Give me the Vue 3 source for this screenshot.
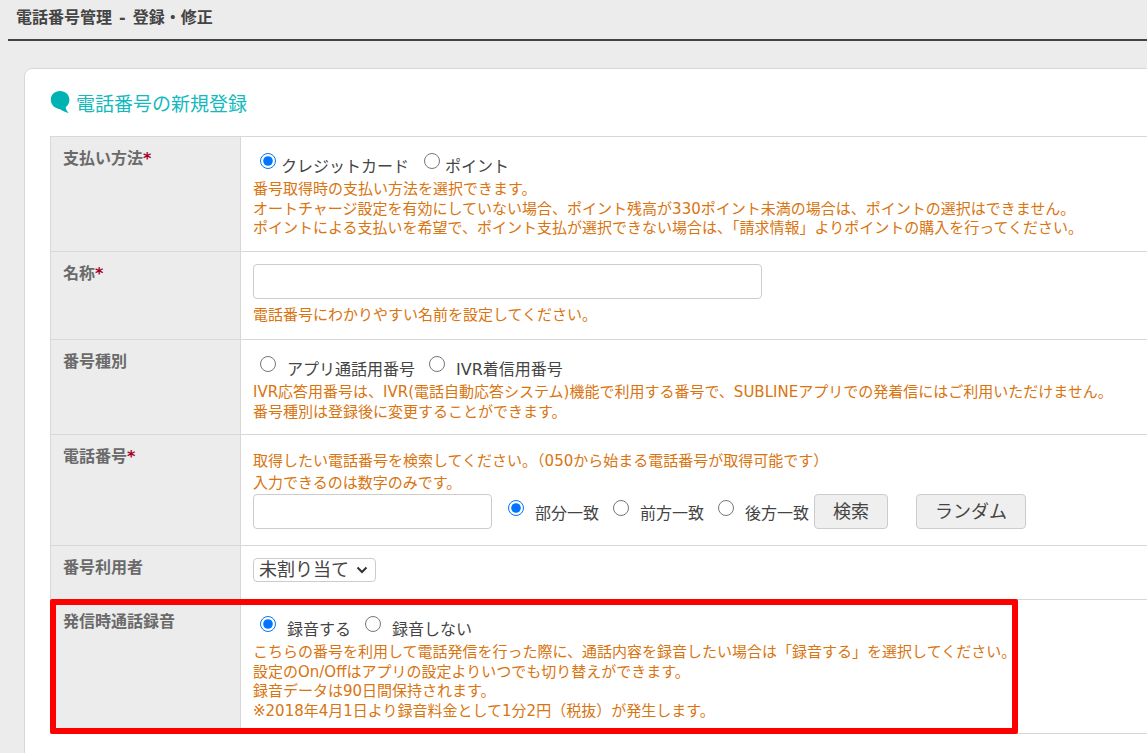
<script setup>
import { ref } from "vue";
const pay = ref("credit");
const kind = ref("");
const match = ref("part");
const rec = ref("on");
</script>
<template>
	<div class="page">
		<div class="title">電話番号管理 - 登録・修正</div>
		<div class="card">
			<h2 class="heading">
				<svg class="bubble" width="20" height="24" viewBox="0 0 20 24">
					<path d="M10 1C4.6 1 .8 4.700 .8 9.800C.8 15 5 18.500 10 19.200C12.200 20.500 14.800 22.300 18.700 23C16.800 21 15.800 19.300 15.700 17.300C17.900 15.700 19.400 13 19.400 9.800C19.400 4.700 15.400 1 10 1Z" fill="#00b3b3" />
				</svg>
				電話番号の新規登録
			</h2>
			<table class="form">
				<tbody>
					<tr class="r-pay">
						<th>支払い方法<span class="req">*</span></th>
						<td>
							<div class="radios tight">
								<label><input type="radio" value="credit" v-model="pay">クレジットカード</label>
								<label><input type="radio" value="point" v-model="pay">ポイント</label>
							</div>
							<p class="note">番号取得時の支払い方法を選択できます。<br>オートチャージ設定を有効にしていない場合、ポイント残高が330ポイント未満の場合は、ポイントの選択はできません。<br>ポイントによる支払いを希望で、ポイント支払が選択できない場合は、「請求情報」よりポイントの購入を行ってください。</p>
						</td>
					</tr>
					<tr class="r-name">
						<th>名称<span class="req">*</span></th>
						<td>
							<input class="text name" type="text">
							<p class="note">電話番号にわかりやすい名前を設定してください。</p>
						</td>
					</tr>
					<tr class="r-kind">
						<th>番号種別</th>
						<td>
							<div class="radios">
								<label><input type="radio" value="app" v-model="kind">アプリ通話用番号</label>
								<label><input type="radio" value="ivr" v-model="kind">IVR着信用番号</label>
							</div>
							<p class="note">IVR応答用番号は、IVR(電話自動応答システム)機能で利用する番号で、SUBLINEアプリでの発着信にはご利用いただけません。<br>番号種別は登録後に変更することができます。</p>
						</td>
					</tr>
					<tr class="r-tel">
						<th>電話番号<span class="req">*</span></th>
						<td>
							<p class="note">取得したい電話番号を検索してください。（050から始まる電話番号が取得可能です）<br>入力できるのは数字のみです。</p>
							<div class="search">
								<input class="text tel" type="text">
								<div class="radios">
									<label><input type="radio" value="part" v-model="match">部分一致</label>
									<label><input type="radio" value="front" v-model="match">前方一致</label>
									<label><input type="radio" value="back" v-model="match">後方一致</label>
								</div>
								<button class="btn find">検索</button>
								<button class="btn random">ランダム</button>
							</div>
						</td>
					</tr>
					<tr class="r-user">
						<th>番号利用者</th>
						<td>
							<div class="user-wrap">
								<select class="user">
									<option>未割り当て</option>
								</select>
								<svg class="chevron" width="12" height="8" viewBox="0 0 12 8">
									<path d="M1.500 1.500L6 6L10.500 1.500" fill="none" stroke="#333" stroke-width="2" />
								</svg>
							</div>
						</td>
					</tr>
					<tr class="r-rec">
						<th>発信時通話録音</th>
						<td>
							<div class="radios">
								<label><input type="radio" value="on" v-model="rec">録音する</label>
								<label><input type="radio" value="off" v-model="rec">録音しない</label>
							</div>
							<p class="note">こちらの番号を利用して電話発信を行った際に、通話内容を録音したい場合は「録音する」を選択してください。<br>設定のOn/Offはアプリの設定よりいつでも切り替えができます。<br>録音データは90日間保持されます。<br>※2018年4月1日より録音料金として1分2円（税抜）が発生します。</p>
						</td>
					</tr>
				</tbody>
			</table>
			<div class="highlight"></div>
		</div>
	</div>
</template>
<style scoped>
.page {
	width: 1147px;
	height: 753px;
	overflow: hidden;
	background: #ececec;
	color: #444;
	font-family: "DejaVu Sans", "Noto Sans CJK JP", sans-serif;
	font-size: 15px;
}

.title {
	margin-left: 8px;
	height: 41px;
	box-sizing: border-box;
	padding: 8px 8px 0;
	border-bottom: 2px solid #444;
	font-size: 16px;
	font-weight: 700;
	line-height: 20px;
	word-spacing: 1.500px;
}

.card {
	position: relative;
	box-sizing: border-box;
	width: 1240px;
	height: 720px;
	margin: 27px 0 0 24px;
	padding: 20px 0 0 25px;
	background: #fff;
	border: 1px solid #d8d8d8;
	border-radius: 8px;
}

.heading {
	display: flex;
	align-items: center;
	gap: 6px;
	height: 26px;
	margin: 0 0 21px;
	color: #14b9bd;
	font-size: 19px;
	font-weight: 400;
}

.form {
	width: 1190px;
	border-collapse: collapse;
	border-top: 1px solid #d8d8d8;
}

.form th,
.form td {
	box-sizing: border-box;
	border-bottom: 1px solid #d8d8d8;
	vertical-align: top;
	text-align: left;
}

.form th {
	width: 190px;
	padding: 11px 12px 0;
	background: #ececec;
	border-left: 1px solid #d8d8d8;
	border-right: 1px solid #d8d8d8;
	color: #6a6a6a;
	font-size: 16px;
	font-weight: 700;
	line-height: 22px;
}

.form td {
	padding: 13px 12px 0;
}

.form .r-name td,
.form .r-user td {
	padding-top: 12px;
}

.form .r-tel td {
	padding-top: 15px;
}

.r-pay th, .r-pay td { height: 115px; }
.r-name th, .r-name td { height: 88px; }
.r-kind th, .r-kind td { height: 95px; }
.r-tel th, .r-tel td { height: 111px; }
.r-user th, .r-user td { height: 54px; }
.r-rec th, .r-rec td { height: 134px; }

.req {
	color: #a5001e;
}

.note {
	margin: 0;
	color: #d9740f;
	font-size: 15px;
	line-height: 19.500px;
}

.r-tel .note {
	line-height: 22px;
}

.radios {
	display: flex;
	gap: 14px;
	height: 30px;
	padding-left: 7px;
	color: #444;
	font-size: 16px;
	line-height: 34px;
}

.radios label {
	display: flex;
	align-items: flex-start;
}

.radios input {
	width: 16px;
	height: 16px;
	margin: 3px 11px 0 0;
}

.radios.tight {
	gap: 15px;
}

.radios.tight input {
	margin-right: 5px;
}

.text {
	box-sizing: border-box;
	border: 1px solid #ccc;
	border-radius: 4px;
	background: #fff;
}

.name {
	display: block;
	width: 509px;
	height: 35px;
	margin-bottom: 7px;
}

.search {
	display: flex;
	align-items: center;
}

.tel {
	width: 239px;
	height: 35px;
	margin-right: 9px;
}

.btn {
	height: 35px;
	border: 1px solid #ccc;
	border-radius: 4px;
	background: #efefef;
	color: #444;
	font-family: inherit;
	font-size: 18px;
	line-height: 1;
}

.find {
	width: 74px;
	margin-left: 5px;
}

.random {
	width: 110px;
	margin-left: 28px;
}

.user-wrap {
	position: relative;
	width: 123px;
}

.user {
	display: block;
	appearance: none;
	box-sizing: border-box;
	width: 123px;
	height: 24px;
	padding: 0 0 3px 5px;
	border: 1px solid #ccc;
	border-radius: 4px;
	background: #fff;
	color: #444;
	font-family: inherit;
	font-size: 18px;
}

.chevron {
	position: absolute;
	right: 8px;
	top: 8px;
	pointer-events: none;
}

.highlight {
	position: absolute;
	left: 25px;
	top: 530px;
	width: 968px;
	height: 135px;
	box-sizing: border-box;
	border: 6px solid #f00;
	border-radius: 2px;
}
</style>
<style>
html, body {
	margin: 0;
	overflow: hidden;
}
</style>
